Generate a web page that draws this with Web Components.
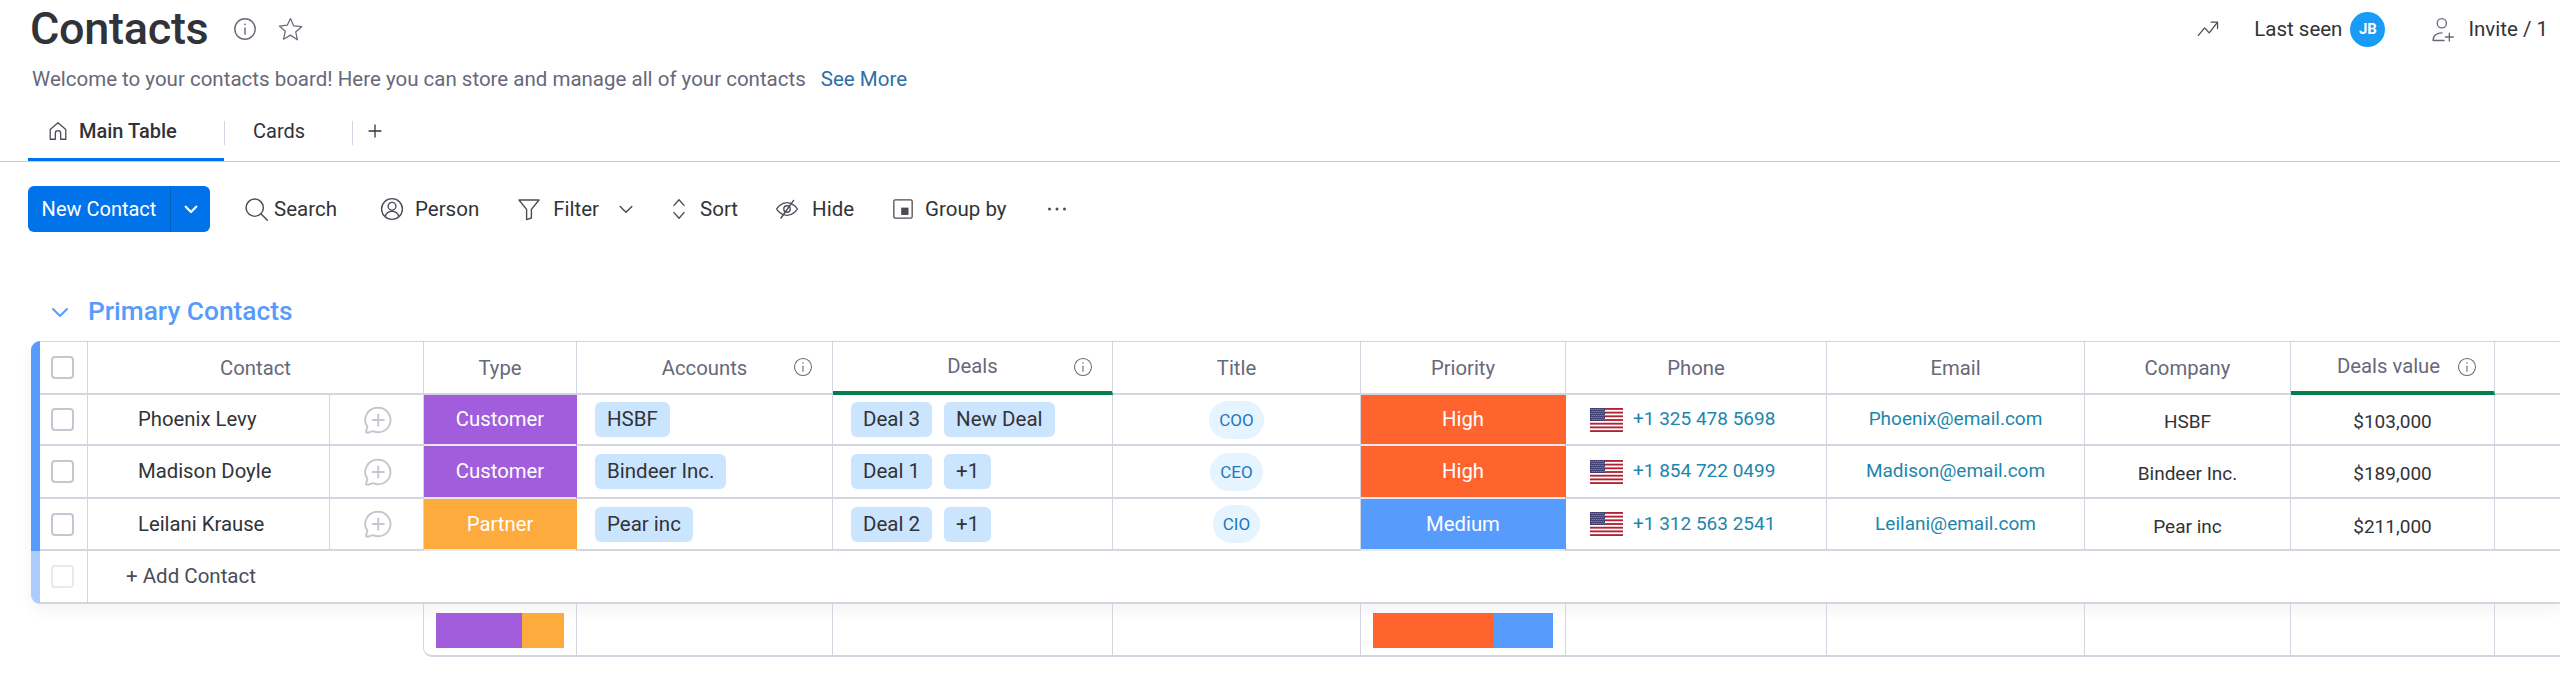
<!DOCTYPE html>
<html lang="en">
<head>
<meta charset="utf-8">
<title>Contacts</title>
<style>
html,body{margin:0;padding:0;background:#fff;overflow:hidden}
body{width:2560px;height:692px;font:20px/1.2 Roboto,"Liberation Sans",sans-serif;color:#323338}
</style>
</head>
<body>
<crm-board>
  <crm-board-header></crm-board-header>
  <crm-tabs></crm-tabs>
  <crm-toolbar>
    <crm-tool icon="search" gap="5" size="25" style="margin-left:37px">Search</crm-tool>
    <crm-tool icon="person" gap="11" style="margin-left:43px">Person</crm-tool>
    <crm-tool icon="filter" gap="12" style="margin-left:38px" caret>Filter</crm-tool>
    <crm-tool icon="sort" gap="9" style="margin-left:31px">Sort</crm-tool>
    <crm-tool icon="hide" gap="13" style="margin-left:37px">Hide</crm-tool>
    <crm-tool icon="group" gap="11" size="22" style="margin-left:38px">Group by</crm-tool>
    <crm-tool icon="dots" gap="0" style="margin-left:38px"></crm-tool>
  </crm-toolbar>
  <crm-group title="Primary Contacts">
    <crm-row style="--h:53px">
      <crm-cell><crm-check></crm-check></crm-cell>
      <crm-cell kind="head" style="grid-column:span 2">Contact</crm-cell>
      <crm-cell kind="head">Type</crm-cell>
      <crm-cell kind="head" info>Accounts</crm-cell>
      <crm-cell kind="head" info accent>Deals</crm-cell>
      <crm-cell kind="head">Title</crm-cell>
      <crm-cell kind="head">Priority</crm-cell>
      <crm-cell kind="head">Phone</crm-cell>
      <crm-cell kind="head">Email</crm-cell>
      <crm-cell kind="head">Company</crm-cell>
      <crm-cell kind="head" info accent shift>Deals value</crm-cell>
      <crm-cell kind="head" end></crm-cell>
    </crm-row>

    <crm-row style="--h:51px">
      <crm-cell><crm-check></crm-check></crm-cell>
      <crm-cell align="start">Phoenix Levy</crm-cell>
      <crm-cell><crm-icon name="chat" size="30" color="#c5c7d0"></crm-icon></crm-cell>
      <crm-cell kind="fill" style="--fill:#a25ddc">Customer</crm-cell>
      <crm-cell align="chips"><crm-chip>HSBF</crm-chip></crm-cell>
      <crm-cell align="chips"><crm-chip>Deal 3</crm-chip><crm-chip>New Deal</crm-chip></crm-cell>
      <crm-cell><crm-bubble>COO</crm-bubble></crm-cell>
      <crm-cell kind="fill" style="--fill:#ff642e">High</crm-cell>
      <crm-cell align="phone"><crm-phone>+1 325 478 5698</crm-phone></crm-cell>
      <crm-cell kind="link">Phoenix@email.com</crm-cell>
      <crm-cell kind="low">HSBF</crm-cell>
      <crm-cell kind="low">$103,000</crm-cell>
      <crm-cell end></crm-cell>
    </crm-row>

    <crm-row style="--h:53px">
      <crm-cell><crm-check></crm-check></crm-cell>
      <crm-cell align="start">Madison Doyle</crm-cell>
      <crm-cell><crm-icon name="chat" size="30" color="#c5c7d0"></crm-icon></crm-cell>
      <crm-cell kind="fill" style="--fill:#a25ddc">Customer</crm-cell>
      <crm-cell align="chips"><crm-chip>Bindeer Inc.</crm-chip></crm-cell>
      <crm-cell align="chips"><crm-chip>Deal 1</crm-chip><crm-chip>+1</crm-chip></crm-cell>
      <crm-cell><crm-bubble>CEO</crm-bubble></crm-cell>
      <crm-cell kind="fill" style="--fill:#ff642e">High</crm-cell>
      <crm-cell align="phone"><crm-phone>+1 854 722 0499</crm-phone></crm-cell>
      <crm-cell kind="link">Madison@email.com</crm-cell>
      <crm-cell kind="low">Bindeer Inc.</crm-cell>
      <crm-cell kind="low">$189,000</crm-cell>
      <crm-cell end></crm-cell>
    </crm-row>

    <crm-row style="--h:52px">
      <crm-cell><crm-check></crm-check></crm-cell>
      <crm-cell align="start">Leilani Krause</crm-cell>
      <crm-cell><crm-icon name="chat" size="30" color="#c5c7d0"></crm-icon></crm-cell>
      <crm-cell kind="fill" style="--fill:#fdab3d">Partner</crm-cell>
      <crm-cell align="chips"><crm-chip>Pear inc</crm-chip></crm-cell>
      <crm-cell align="chips"><crm-chip>Deal 2</crm-chip><crm-chip>+1</crm-chip></crm-cell>
      <crm-cell><crm-bubble>CIO</crm-bubble></crm-cell>
      <crm-cell kind="fill" style="--fill:#579bfc">Medium</crm-cell>
      <crm-cell align="phone"><crm-phone>+1 312 563 2541</crm-phone></crm-cell>
      <crm-cell kind="link">Leilani@email.com</crm-cell>
      <crm-cell kind="low">Pear inc</crm-cell>
      <crm-cell kind="low">$211,000</crm-cell>
      <crm-cell end></crm-cell>
    </crm-row>

    <crm-row style="--h:53px">
      <crm-cell><crm-check faint></crm-check></crm-cell>
      <crm-cell align="add" end style="grid-column:2 / -1">+ Add Contact</crm-cell>
    </crm-row>

    <crm-row slot="summary" style="--h:53px">
      <crm-cell kind="blank" style="grid-column:span 3"></crm-cell>
      <crm-cell kind="sum" corner><crm-bar a="#a25ddc" b="#fdab3d" split="67"></crm-bar></crm-cell>
      <crm-cell kind="sum"></crm-cell>
      <crm-cell kind="sum"></crm-cell>
      <crm-cell kind="sum"></crm-cell>
      <crm-cell kind="sum"><crm-bar a="#ff642e" b="#579bfc" split="67"></crm-bar></crm-cell>
      <crm-cell kind="sum"></crm-cell>
      <crm-cell kind="sum"></crm-cell>
      <crm-cell kind="sum"></crm-cell>
      <crm-cell kind="sum"></crm-cell>
      <crm-cell kind="sum" end></crm-cell>
    </crm-row>
  </crm-group>
</crm-board>

<script>
const ICONS = {
  info:'<circle cx="12" cy="12" r="10.2"/><path d="M12 11v6.2"/><circle cx="12" cy="7.3" r=".9" fill="currentColor" stroke="none"/>',
  star:'<path d="M12 2.2l2.9 6.6 7 .7-5.3 4.7 1.6 7L12 17l-6.2 3.6 1.6-7-5.3-4.7 7-.7z"/>',
  home:'<path d="M3.5 21V10.4L12 3l8.5 7.4V21h-5.6v-6.5a2.9 2.9 0 0 0-5.8 0V21z"/>',
  search:'<circle cx="10.3" cy="10.3" r="8.3"/><path d="M16.4 16.4l6 6"/>',
  person:'<circle cx="12" cy="12" r="10.4"/><circle cx="12" cy="9.3" r="3.9"/><path d="M5.2 19.4c1-3.3 3.6-5 6.8-5s5.8 1.7 6.8 5"/>',
  filter:'<path d="M2 3h20l-7.6 9.4V21l-4.8 1.6V12.4z"/>',
  sort:'<path d="M7 8.4l5-5.6 5 5.6M7 15.6l5 5.6 5-5.6"/>',
  hide:'<path d="M1.6 12S5.6 5.6 12 5.6 22.4 12 22.4 12 18.4 18.4 12 18.4 1.6 12 1.6 12z"/><circle cx="12" cy="12" r="3.2"/><path d="M18.6 3.4L6 21"/>',
  group:'<rect x="2" y="2" width="20" height="20" rx="1.5"/><rect x="10" y="10.5" width="8" height="8" fill="currentColor" stroke="none"/>',
  dots:'<circle cx="4.5" cy="12" r="1.5" fill="currentColor" stroke="none"/><circle cx="12" cy="12" r="1.5" fill="currentColor" stroke="none"/><circle cx="19.5" cy="12" r="1.5" fill="currentColor" stroke="none"/>',
  caret:'<path d="M5 9l7 7 7-7"/>',
  plus:'<path d="M12 4v16M4 12h16"/>',
  trend:'<path d="M1.5 19l6.8-8.2 5 5.4L22 5"/><path d="M15.5 4.6H22.4V11.5"/>',
  invite:'<circle cx="10.4" cy="6" r="4.4"/><path d="M2 22.6c0-2 .6-4.2 2.4-5.6 1.5-1.2 3.6-1.8 6.2-1.8M2 22.6h10.5M17.6 15.5v7.5M13.8 19.2h7.6"/>',
  chat:'<path d="M13 2.2a9.8 9.8 0 1 1-4.1 18.7l-4.3 1.3c-.9.2-1.5-.4-1.3-1.2l1-3.5A9.8 9.8 0 0 1 13 2.2z"/><path d="M13 7.5v9M8.5 12h9"/>'
};

function shadow(el, html){
  const r = el.attachShadow({mode:'open'});
  r.innerHTML = html;
  return r;
}

customElements.define('crm-icon', class extends HTMLElement{
  connectedCallback(){
    if(this.shadowRoot) return;
    const n = this.getAttribute('name');
    const s = this.getAttribute('size') || 24;
    const w = this.getAttribute('stroke') || 1.5;
    const c = this.getAttribute('color') || 'currentColor';
    shadow(this, `<style>:host{display:inline-flex;flex:none;width:${s}px;height:${s}px;color:${c}}svg{display:block;width:100%;height:100%}</style>
    <svg viewBox="0 0 24 24" fill="none" stroke="currentColor" stroke-width="${w}" stroke-linecap="round" stroke-linejoin="round">${ICONS[n]||''}</svg>`);
  }
});

customElements.define('crm-board', class extends HTMLElement{
  constructor(){super();shadow(this,`<style>:host{display:block;width:2560px;height:692px;--line:#d3d6e0;
    --cols:48px 242px 94px 153px 256px 280px 248px 205px 261px 258px 206px 204px 1fr}</style><slot></slot>`);}
});

customElements.define('crm-board-header', class extends HTMLElement{
  constructor(){super();shadow(this,`<style>
    :host{display:block;height:100px}
    .top{display:flex;align-items:center;height:58px;padding:0 12px 0 30px}
    h1{margin:0;font:500 45px/56px Roboto,sans-serif;color:#323338;letter-spacing:-.3px}
    .info{margin-left:25px}
    .star{margin-left:20px}
    .right{margin-left:auto;display:flex;align-items:center;font-size:20.5px;color:#323338}
    .seen{margin-left:35px}
    .av{margin-left:8px;width:35px;height:35px;border-radius:50%;background:#1a9bf5;color:#fff;font:700 15px/35px Roboto,sans-serif;text-align:center}
    .inv{margin-left:46px;margin-right:12px}
    p{margin:0;height:42px;padding-left:32px;font-size:20.5px;line-height:42px;color:#676879}
    a{margin-left:15px;color:#2f6ea5;text-decoration:none}
  </style>
  <div class="top"><h1>Contacts</h1>
    <crm-icon class="info" name="info" size="24" color="#676879" stroke="1.4"></crm-icon>
    <crm-icon class="star" name="star" size="27" color="#676879" stroke="1.1"></crm-icon>
    <div class="right">
      <crm-icon name="trend" size="22" color="#4b4c57" stroke="1.4"></crm-icon>
      <span class="seen">Last seen</span><span class="av">JB</span>
      <crm-icon class="inv" name="invite" size="25" color="#676879" stroke="1.3"></crm-icon>
      <span>Invite / 1</span>
    </div>
  </div>
  <p>Welcome to your contacts board! Here you can store and manage all of your contacts<a>See More</a></p>`);}
});

customElements.define('crm-tabs', class extends HTMLElement{
  constructor(){super();shadow(this,`<style>
    :host{display:flex;height:62px;padding:1px 0 0 28px;box-sizing:border-box;border-bottom:1px solid #c9cbd3;align-items:stretch;color:#323338;font-size:20px}
    .t{display:flex;align-items:center;box-sizing:border-box;height:60px;position:relative}
    .main{width:196px;padding-left:19px;border-bottom:3px solid #0073ea;font-weight:500;gap:10px;padding-top:3px}
    .cards{width:127px;padding-left:28px}
    .sep{width:1px;height:24px;background:#d0d4e4;align-self:flex-start;margin-top:20px}
    .plus{margin-left:13px;height:60px}
  </style>
  <div class="t main"><crm-icon name="home" size="22" color="#4b4c57" stroke="1.4"></crm-icon><span>Main Table</span></div>
  <span class="sep"></span>
  <div class="t cards">Cards</div>
  <span class="sep"></span>
  <div class="t plus"><crm-icon name="plus" size="18" color="#323338" stroke="1.7"></crm-icon></div>`);}
});

customElements.define('crm-toolbar', class extends HTMLElement{
  constructor(){super();shadow(this,`<style>
    :host{display:flex;align-items:center;height:46px;margin:24px 0 0 28px}
    .btn{display:flex;width:182px;height:46px;margin-right:-3px;background:#0073ea;color:#fff;border-radius:6px;font-size:20px;align-items:center}
    .l{width:142px;text-align:center;box-sizing:border-box}
    .r{flex:1;height:100%;border-left:1px solid #0060b9;display:flex;align-items:center;justify-content:center}
  </style>
  <div class="btn"><span class="l">New Contact</span><span class="r"><crm-icon name="caret" size="18" color="#fff" stroke="3"></crm-icon></span></div>
  <slot></slot>`);}
});

customElements.define('crm-tool', class extends HTMLElement{
  connectedCallback(){
    if(this.shadowRoot) return;
    const icon=this.getAttribute('icon'), gap=this.getAttribute('gap')||8, caret=this.hasAttribute('caret'), size=this.getAttribute('size')||24;
    shadow(this,`<style>
      :host{display:inline-flex;align-items:center;gap:${gap}px;font-size:20.5px;color:#323338}
      .c{margin-left:5px}
    </style>
    <crm-icon name="${icon}" size="${size}" color="#4b4c57" stroke="1.4"></crm-icon><slot></slot>
    ${caret?'<crm-icon class="c" name="caret" size="20" color="#4b4c57" stroke="1.8"></crm-icon>':''}`);
  }
});

customElements.define('crm-group', class extends HTMLElement{
  connectedCallback(){
    if(this.shadowRoot) return;
    shadow(this,`<style>
      :host{display:block;margin-top:58px}
      .title{display:flex;align-items:center;height:44px;margin-bottom:7px;padding-left:48px;gap:16px;color:#579bfc;font-size:26.3px;font-weight:500}
      .table{display:flex;margin-left:31px;border-radius:9px 0 0 9px;box-shadow:0 6px 14px rgba(50,51,56,.06)}
      .bar{width:9px;flex:none;display:flex;flex-direction:column;border-radius:9px 0 0 9px;overflow:hidden}
      .a{height:210px;background:#579bfc}.b{flex:1;background:#abcdfd}
      .rows{flex:1;border-top:1px solid var(--line)}
      .sum{display:block;margin-left:40px}
    </style>
    <div class="title"><crm-icon name="caret" size="24" color="#579bfc" stroke="2"></crm-icon><span>${this.getAttribute('title')}</span></div>
    <div class="table"><div class="bar"><div class="a"></div><div class="b"></div></div><div class="rows"><slot></slot></div></div>
    <div class="sum"><slot name="summary"></slot></div>`);
    this.removeAttribute('title');
  }
});

customElements.define('crm-row', class extends HTMLElement{
  constructor(){super();shadow(this,`<style>:host{display:grid;grid-template-columns:var(--cols);height:var(--h)}</style><slot></slot>`);}
});

customElements.define('crm-cell', class extends HTMLElement{
  connectedCallback(){
    if(this.shadowRoot) return;
    const info=this.hasAttribute('info');
    shadow(this,`<style>
      :host{display:flex;position:relative;box-sizing:border-box;align-items:center;justify-content:center;min-width:0;
        border-right:1px solid var(--line);border-bottom:2px solid var(--line);font-size:20.3px;color:#323338;white-space:nowrap}
      :host([end]){border-right:0}
      :host([kind=head]){color:#676879;padding-top:2px}
      :host([accent]){border-bottom:4px solid #037f4c;padding-top:0}
      :host([shift]){padding-right:8px}
      :host([kind=fill]){background:var(--fill);color:#fff;border-right-color:#fff0;border-bottom-color:#e6e9ef}
      :host([kind=link]){color:#1c86ac;font-size:19px}
      :host([kind=low]){padding-top:6px;font-size:19px}
      :host([kind=blank]){border:0}
      :host([kind=sum]){padding:9px 12px 7px;align-items:stretch}
      :host([corner]){border-left:1px solid var(--line);border-bottom-left-radius:9px;padding-left:12px;margin-left:-1px}
      :host([align=start]){justify-content:flex-start;padding-left:50px}
      :host([align=add]){justify-content:flex-start;padding-left:38px;color:#4b4c57;font-size:20.5px}
      :host([align=chips]){justify-content:flex-start;padding-left:18px;gap:12px}
      :host([align=phone]){justify-content:flex-start;padding-left:24px}
      .i{position:absolute;right:19px;top:15px}
      :host([shift]) .i{right:17px}
    </style><slot></slot>${info?'<crm-icon class="i" name="info" size="20" color="#676879" stroke="1.3"></crm-icon>':''}`);
  }
});

customElements.define('crm-check', class extends HTMLElement{
  constructor(){super();shadow(this,`<style>
    :host{display:block;width:23px;height:23px;box-sizing:border-box;border:2px solid #c5c7d0;border-radius:4px;margin-right:2px}
    :host([faint]){border-color:#e6e9ef}
  </style>`);}
});

customElements.define('crm-chip', class extends HTMLElement{
  constructor(){super();shadow(this,`<style>
    :host{display:block;height:35px;line-height:35px;padding:0 12px;border-radius:6px;background:#cce5ff;color:#323338;font-size:20.5px}
  </style><slot></slot>`);}
});

customElements.define('crm-bubble', class extends HTMLElement{
  constructor(){super();shadow(this,`<style>
    :host{display:block;height:38px;line-height:38px;padding:0 10px;border-radius:19px;background:#e5f4ff;color:#1f76c2;font-size:17px}
  </style><slot></slot>`);}
});

customElements.define('crm-phone', class extends HTMLElement{
  constructor(){
    super();
    let stripes='';
    for(let i=0;i<7;i++) stripes+=`<rect y="${i*2*24/13}" width="33" height="${24/13}" fill="#b22234"/>`;
    let stars='';
    for(let y=0;y<6;y++) for(let x=0;x<7;x++) stars+=`<circle cx="${1.1+x*2+(y%2)}" cy="${1.2+y*2}" r=".5" fill="#cfd3e6"/>`;
    shadow(this,`<style>
      :host{display:flex;align-items:center;gap:10px;color:#1c86ac;font-size:19px}
      svg{display:block;flex:none}
    </style>
    <svg width="33" height="24" viewBox="0 0 33 24"><rect width="33" height="24" fill="#fff"/>${stripes}<rect width="15" height="13" fill="#3c3b6e"/>${stars}</svg><slot></slot>`);
  }
});

customElements.define('crm-bar', class extends HTMLElement{
  connectedCallback(){
    if(this.shadowRoot) return;
    const a=this.getAttribute('a'),b=this.getAttribute('b'),s=this.getAttribute('split');
    shadow(this,`<style>:host{display:flex;flex:1}i{display:block}</style>
      <i style="background:${a};width:${s}%"></i><i style="background:${b};flex:1"></i>`);
  }
});
</script>
</body>
</html>
